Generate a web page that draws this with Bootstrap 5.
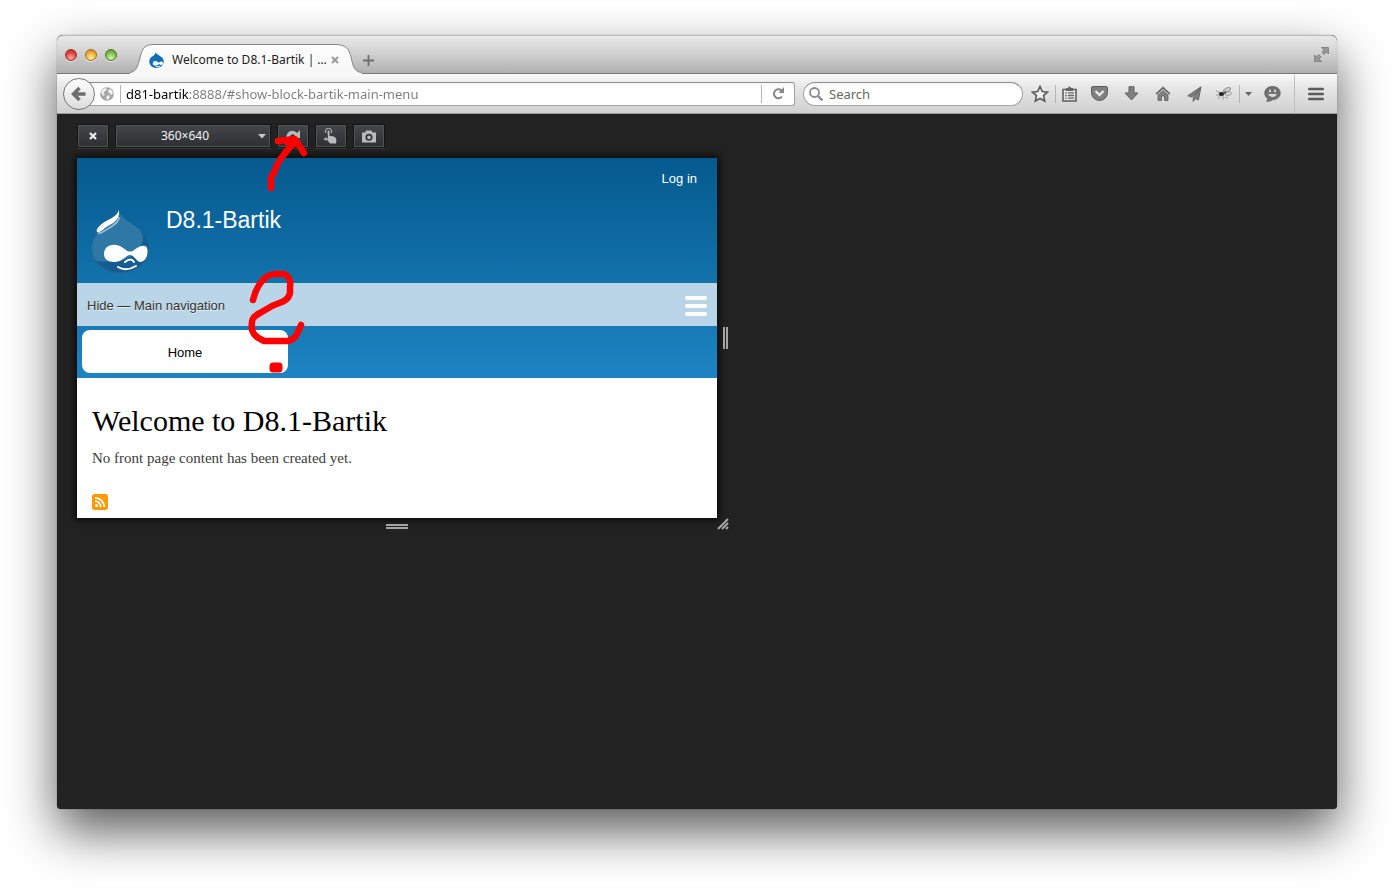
<!DOCTYPE html>
<html lang="en">
<head>
<meta charset="utf-8">
<meta name="viewport" content="width=device-width, initial-scale=1">
<title>Welcome to D8.1-Bartik | D8.1-Bartik</title>
<link href="https://cdn.jsdelivr.net/npm/bootstrap@5.3.0/dist/css/bootstrap.min.css" rel="stylesheet">
<style>
  body { background: #fff; font-family: "Noto Sans", "Open Sans", sans-serif; font-size: 12px; line-height: 16px; }
  button, .plain-btn { border: 0; background: none; padding: 0; }
  svg { display: block; flex: none; }
  .desktop { padding: 35px 57px 79px; min-height: 100vh; }
  .browser { background: #222; border-radius: 6px 6px 4px 4px; box-shadow: 0 22px 50px rgba(0,0,0,.65), 0 0 1px rgba(0,0,0,.7); }

  /* window chrome */
  .titlebar { height: 39px; padding: 0 8px; background: linear-gradient(#e9e9e9, #d2d2d2 45%, #b0b0b0); border-bottom: 1px solid #777; border-top: 1px solid #bdbdbd; border-radius: 6px 6px 0 0; }
  .light { width: 12px; height: 12px; border-radius: 50%; box-shadow: 0 1px 0 rgba(255,255,255,.6); }
  .light-close { background: radial-gradient(circle at 50% 80%, #ffb0a8, #e8433f 55%, #a52c2a); border: 1px solid #983330; }
  .light-min { background: radial-gradient(circle at 50% 80%, #ffeb9c, #f3b23c 55%, #b37818); border: 1px solid #a2701f; }
  .light-zoom { background: radial-gradient(circle at 50% 80%, #d8f5a5, #7fc050 55%, #4c852c); border: 1px solid #4b7c31; }
  .tab-item { width: 232px; height: 29px; margin-left: 13px; }
  .tab-shape { position: absolute; left: 0; top: 0; }
  .tab-face { position: relative; padding: 3px 23px 0 19px; }
  .tab-face span { color: #1c1c1c; }
  .new-tab { width: 12px; height: 29px; padding-top: 4px; }

  .toolbar-row { height: 40px; background: linear-gradient(#fafafa, #e6e6e6 35%, #d0d0d0); border-bottom: 1px solid #9a9a9a; padding-left: 6px; }
  .back-btn { position: relative; width: 32px; height: 32px; border: 1px solid #777; border-radius: 50%; background: linear-gradient(#fefefe, #dcdcdc); }
  .field-box { height: 24px; border: 1px solid #a3a3a3; border-top-color: #8b8b8b; background: linear-gradient(#f7f7f7, #fff 30%); }
  .url-box { margin-left: -8px; padding-left: 13px; border-radius: 0 3px 3px 0; border-left: 0; }
  .url-rule { margin: 0 5px 0 6px; }
  .search-box { width: 220px; margin-left: 8px; border-radius: 12px; padding: 0 8px 0 5px; }
  .search-box input { margin-left: 6px; }
  .field-box input { border: 0; outline: 0; padding: 0; background: none; height: 20px; min-width: 0; font-size: 13px; }
  .search-box input::placeholder { color: #666; opacity: 1; }
  .field-box input.url-input { font-size: 13px; color: #777; background: linear-gradient(90deg, #000 64px, #7b7b7b 64px); -webkit-background-clip: text; background-clip: text; -webkit-text-fill-color: transparent; }
  .rule-v { width: 1px; height: 18px; background: #b5b5b5; }
  .tools { margin-left: 2px; }
  .tools button, .reload-btn { display: flex; justify-content: center; align-items: center; height: 24px; }
  .w-sm-cell { width: 30px; } .w-list { width: 27px; } .w-md-cell { width: 32px; } .w-caret { width: 16px; }
  .menu-cell { width: 42px; }
  .menu-rule { width: 1px; height: 38px; background: #bdbdbd; margin-left: 6px; }

  /* responsive design view */
  .stage { position: relative; padding: 10px 20px 0; min-height: 695px; }
  .rdm-bar { gap: 6px; margin-bottom: 10px; }
  .rdm-btn, .rdm-size { height: 24px; border: 1px solid #141414; background: linear-gradient(#44474a, #2d2f31); box-shadow: inset 0 0 0 1px #505456, 0 1px 0 #3a3a3a; color: #f0f4f8; border-radius: 0; }
  .rdm-btn { width: 32px; display: flex; align-items: center; justify-content: center; }
  .rdm-size { width: 156px; font-size: 12px; padding: 0 16px 0 0; appearance: none; text-align-last: center; }
  .size-wrap { position: relative; }
  .size-caret { position: absolute; right: 5px; top: 10px; pointer-events: none; }
  .device-grid { display: grid; grid-template-columns: minmax(0, 640px) 17px; grid-template-rows: auto 16px; }
  .device { min-height: 360px; background: #fff; box-shadow: 0 0 7px 2px rgba(0,0,0,.75); }
  .grip-v { width: 5px; height: 22px; border: solid #a5a5a5; border-width: 0 2px; }
  .grip-h { width: 22px; height: 5px; border: solid #a5a5a5; border-width: 2px 0; }

  /* the site */
  .site-text { font-family: "Liberation Sans", Arial, sans-serif; }
  .site-head { background: linear-gradient(#055a8e, #1d84c3); }
  .site-head a { text-decoration: none; }
  .login-row { padding: 12px 20px 0; height: 47px; font-size: 13px; line-height: 18px; }
  .brand-row { height: 78px; padding: 0 15px; gap: 16px; }
  .brand-logo { margin-top: 4px; }
  .brand-name { font-size: 23px; line-height: 30px; }
  .nav-toggle { height: 43px; padding: 2px 10px 0; background: #b9d5e7; color: #333; font-size: 13px; text-shadow: 0 1px #eee; }
  .burger { display: grid; gap: 4px; }
  .burger i { width: 22px; height: 4px; border-radius: 2px; background: #fff; }
  .home-row { padding: 4px 5px 5px; }
  .home-link { width: 206px; height: 43px; border-radius: 8px; font-size: 13px; line-height: 46px; }
  .site-main { padding: 24px 15px 8px; font-family: "Liberation Serif", Georgia, serif; color: #3b3b3b; }
  .site-main h1 { font-size: 30px; line-height: 38px; margin-bottom: 8px; color: #000; font-weight: 400; }
  .site-main p { font-size: 15px; line-height: 20px; margin-bottom: 26px; }
  .feed-link { display: block; width: 16px; }
  .scribble { position: absolute; left: 180px; top: 10px; pointer-events: none; }
</style>
</head>
<body>
<div class="desktop d-flex flex-column">
 <div class="browser flex-grow-1 d-flex flex-column">
  <header class="titlebar d-flex">
    <div class="d-flex align-items-center gap-2" aria-hidden="true">
      <span class="light light-close"></span><span class="light light-min"></span><span class="light light-zoom"></span>
    </div>
    <div class="tab-item position-relative mt-auto">
      <svg class="tab-shape" width="232" height="30" viewBox="0 0 232 30">
        <defs><linearGradient id="tabFill" x1="0" y1="0" x2="0" y2="1"><stop offset="0" stop-color="#fdfdfd"/><stop offset="1" stop-color="#f7f7f7"/></linearGradient></defs>
        <path d="M0 28.500C6 28 8 22 10 14C12 5 14 .5 24 .5H205C216 .5 219 5 221 13C223 22 224 28 232 28.500V30H0Z" fill="url(#tabFill)"/>
        <path d="M0 28.500C6 28 8 22 10 14C12 5 14 .5 24 .5H205C216 .5 219 5 221 13C223 22 224 28 232 28.500" fill="none" stroke="#888"/>
      </svg>
      <div class="tab-face d-flex align-items-center h-100">
        <svg width="15" height="16" viewBox="0 0 58 64"><path d="M26 0c2 7 7 10 14 14c10 6 18 13 18 25a29 25 0 0 1-58 0C0 26 8 19 16 14c6-4 9-7 10-14Z" fill="#0b6db3"/><path d="M22 8c-1 6-12 9-17 15c3-8 11-11 17-15Z" fill="#fff"/><path d="M14 46c0-12 14-13 24-3c8-7 16-7 17 2c0 8-8 10-16 3c-10 10-25 8-25-2Z" fill="#fff"/><path d="M26 57q9 6 18-1" stroke="#fff" stroke-width="4" fill="none"/></svg>
        <span class="ms-2 text-nowrap">Welcome to D8.1-Bartik | …</span>
        <button class="ms-auto" type="button" aria-label="Close tab"><svg width="8" height="8" viewBox="0 0 8 8"><path d="M1 1l6 6M7 1L1 7" stroke="#999" stroke-width="2"/></svg></button>
      </div>
    </div>
    <button class="new-tab mt-auto d-flex align-items-center justify-content-center" type="button" aria-label="New tab"><svg width="11" height="11" viewBox="0 0 11 11"><path d="M5.500 0v11M0 5.500h11" stroke="#6d6d6d" stroke-width="1.800"/></svg></button>
    <button class="ms-auto" type="button" aria-label="Full screen"><svg width="15" height="15" viewBox="0 0 14 14" fill="#999" stroke="#6f6f6f" stroke-width=".7"><path d="M7 .5h6.500v6l-2-2-2 2.500-2-2 2-2.500z"/><path d="M7 13.500H.5v-6l2 2 2-2.500 2 2-2 2.500z"/></svg></button>
  </header>

  <nav class="toolbar-row d-flex align-items-center" aria-label="Browser toolbar">
    <button class="back-btn d-flex align-items-center justify-content-center z-1" type="button" aria-label="Back"><svg width="16" height="16" viewBox="0 0 16 16"><path d="M8.500 2L2.500 8l6 6M3 8h11.500" fill="none" stroke="#6e6e6e" stroke-width="3.500"/></svg></button>
    <div class="field-box url-box flex-grow-1 d-flex align-items-center">
      <svg width="14" height="14" viewBox="0 0 14 14"><circle cx="7" cy="7" r="6.800" fill="#a5a5a5"/><path d="M1 5Q2 2 5.500 1L7 2.500 5 4 3.500 6 5 8 3 9 2 7ZM9 2L11.500 3 13 6.500 11 8 9.500 6 8 5ZM7 9L9 8 10 10 8 13 6 11Z" fill="#f2f2f2"/></svg>
      <span class="rule-v url-rule"></span>
      <input class="url-input flex-grow-1" type="text" aria-label="Address" value="d81-bartik:8888/#show-block-bartik-main-menu">
      <span class="rule-v"></span>
      <button class="reload-btn w-md-cell" type="button" aria-label="Reload"><svg width="13" height="13" viewBox="0 0 13 13"><path d="M10 9.500A4.500 4.500 0 1 1 9.500 3.500" fill="none" stroke="#858585" stroke-width="2"/><path d="M12 0v6H6.500z" fill="#858585"/></svg></button>
    </div>
    <div class="field-box search-box d-flex align-items-center">
      <svg width="14" height="14" viewBox="0 0 14 14" fill="none" stroke="#8b8b8b"><circle cx="5.500" cy="5.500" r="4.500" stroke-width="1.800"/><path d="M9 9l4.500 4.500" stroke-width="2.400"/></svg>
      <input class="flex-grow-1" type="search" placeholder="Search" aria-label="Search">
    </div>
    <div class="tools d-flex align-items-center">
      <button class="w-sm-cell" type="button" aria-label="Bookmark"><svg width="18" height="18" viewBox="0 0 18 18"><path d="M9 1.500l2.300 5 5.200.6-3.900 3.500 1.100 5.400L9 13.400 4.300 16l1.100-5.400L1.500 7.100l5.200-.6z" fill="#eee" stroke="#5e5e5e" stroke-width="1.700"/></svg></button>
      <span class="rule-v"></span>
      <button class="w-list" type="button" aria-label="Bookmarks list"><svg width="15" height="16" viewBox="0 0 15 16"><path d="M1 3.500h13V15H1z" fill="#e6e6e6" stroke="#5e5e5e" stroke-width="1.600"/><path d="M4 2h2a1.500 1.500 0 0 1 3 0h2v3H4z" fill="#666"/><path d="M3.200 6.800h1.600m1.200 0h6M3.200 9.500h1.600m1.200 0h6M3.200 12.200h1.600m1.200 0h6" stroke="#666" stroke-width="1.300"/></svg></button>
      <button class="w-md-cell" type="button" aria-label="Pocket"><svg width="17" height="15" viewBox="0 0 17 15"><path d="M2 .5h13q1.500 0 1.500 1.500v4.500a8 8 0 0 1-16 0V2Q.5.500 2 .5z" fill="#808080" stroke="#5e5e5e"/><path d="M4.500 5l4 4 4-4" fill="none" stroke="#eee" stroke-width="2.200"/></svg></button>
      <button class="w-md-cell" type="button" aria-label="Downloads"><svg width="15" height="15" viewBox="0 0 15 15"><path d="M5 .7h5V7h4L7.500 14 1 7h4z" fill="#808080" stroke="#606060"/></svg></button>
      <button class="w-md-cell" type="button" aria-label="Home page"><svg width="16" height="15" viewBox="0 0 16 15"><path d="M8 .5l7.500 7-1.200 1.200L8 3 1.700 8.700.5 7.500z" fill="#666"/><path d="M3 9l5-4.500L13 9v5.500H9.500V10h-3v4.500H3z" fill="#808080" stroke="#606060" stroke-width=".8"/></svg></button>
      <button class="w-sm-cell" type="button" aria-label="Share"><svg width="15" height="16" viewBox="0 0 15 16"><path d="M14 .8L.8 9.800l4 1.200L13 3 6.200 11.500v4l2.200-3 3 1.500z" fill="#808080" stroke="#5e5e5e" stroke-width=".9"/></svg></button>
      <button class="w-sm-cell" type="button" aria-label="Debugger"><svg width="16" height="14" viewBox="0 0 16 14"><g fill="none" stroke="#888" stroke-width=".8"><path d="M0 4l5 2M2 12l3-4M7 13V8M0 8h5M9 10l3 1"/><ellipse cx="11" cy="3" rx="4" ry="2" fill="#ccc" transform="rotate(-28 11 3)"/><ellipse cx="12" cy="6.500" rx="3.500" ry="1.800" fill="#ddd"/></g><ellipse cx="5.500" cy="7" rx="2.600" ry="2" fill="#222"/><circle cx="9" cy="5.500" r="1.500" fill="#666"/></svg></button>
      <span class="rule-v"></span>
      <button class="w-caret" type="button" aria-label="Debugger options"><svg width="7" height="4" viewBox="0 0 7 4"><path d="M0 0h7L3.500 4z" fill="#666"/></svg></button>
      <button class="w-md-cell" type="button" aria-label="Chat"><svg width="17" height="16" viewBox="0 0 17 16"><path d="M8.500.5c4.500 0 7.700 2.700 7.700 6.500s-3.200 6.700-7.700 6.700c-1 1-3 1.800-6 1.500 1-.8 1.300-1.800 1-3C1.500 11 .8 9 .8 7 .8 3.200 4 .5 8.500.5z" fill="#717171" stroke="#5e5e5e" stroke-width=".8"/><ellipse cx="6" cy="5" rx="1" ry="1.400" fill="#ddd"/><ellipse cx="11" cy="5" rx="1" ry="1.400" fill="#ddd"/><path d="M4 8h9q-1.500 3-4.500 3T4 8z" fill="#ddd"/></svg></button>
      <span class="menu-rule"></span>
      <button class="menu-cell" type="button" aria-label="Open menu"><svg width="16" height="14" viewBox="0 0 16 14"><path d="M1.200 2h13.600M1.200 7h13.600M1.200 12h13.600" stroke="#5b5b5b" stroke-width="2.600" stroke-linecap="round"/></svg></button>
    </div>
  </nav>

  <main class="stage flex-grow-1">
    <div class="rdm-bar d-flex">
      <button class="rdm-btn" type="button" aria-label="Leave responsive view"><svg width="8" height="8" viewBox="0 0 8 8"><path d="M1 1l6 6M7 1L1 7" stroke="#eee" stroke-width="2.200"/></svg></button>
      <div class="size-wrap">
        <select class="rdm-size d-block" aria-label="Screen size"><option>360×640</option></select>
        <svg class="size-caret" width="8" height="5" viewBox="0 0 8 5"><path d="M0 0h8L4 4.500z" fill="#c5c8ca"/></svg>
      </div>
      <button class="rdm-btn" type="button" aria-label="Rotate"><svg width="16" height="12" viewBox="0 0 16 12"><path d="M1 10C1 0 8 -1 12 3L15 0v8H7l3-3C7 3 4 5 4 10z" fill="#b8babd"/></svg></button>
      <button class="rdm-btn" type="button" aria-label="Simulate touch"><svg width="16" height="16" viewBox="0 0 16 16"><path d="M3 5a3 3 0 1 1 5 0" fill="none" stroke="#a8aaad" stroke-width="1.200"/><path d="M4.500 3q1-1.200 2 0v5q4-.5 6 1.500 1.500 2 .5 6H7L3.500 11q0-1 1.500-.5z" fill="#b8babd"/><path d="M3.500 9v4L.5 11z" fill="#b8babd"/></svg></button>
      <button class="rdm-btn" type="button" aria-label="Screenshot"><svg width="16" height="13" viewBox="0 0 16 13"><path d="M1 2.500h3L5 .5h5.500l1 2H15v10H1z" fill="#b8babd"/><circle cx="8" cy="7.300" r="2.700" fill="#b8babd" stroke="#333" stroke-width="1.700"/></svg></button>
    </div>

    <div class="device-grid">
      <div class="device">
        <header class="site-head site-text">
          <div class="login-row text-end"><a class="text-white" href="#">Log in</a></div>
          <div class="brand-row d-flex align-items-start">
            <svg class="brand-logo" width="58" height="65" viewBox="0 0 58 65">
              <path d="M27 1c1 6 7 10 13 14c10 6 17 15 17 25a28.500 24 0 0 1-57 0C0 29 7 21 15 17C21 13 26 9 27 1Z" fill="#155d90"/>
              <path d="M27 1c1 6 7 10 13 14c7 4 11 9 11 14c0 10-11 22-27 23c-10 1-19 1-23-2C-3 34 4 22 15 17C21 13 26 9 27 1Z" fill="#2f78a6"/>
              <path d="M57 40a28.500 24 0 0 1-57 0" fill="none" stroke="#2b6793"/>
              <path d="M27 1C28 10 22 14 16 17C11 20 7 25 5 23C3 20 10 14 16 11C22 8 25 6 27 1Z" fill="#fff"/><path d="M27 8c0 6-8 10-13 13c-3 2-5 4-8 3" fill="none" stroke="#a3c1d5" stroke-width="1.500"/>
              <path d="M12 45C12 35 24 32 34 41C36 43 40 43 42 41C49 36 55 35 55.500 41C56 49 52 53 48 53C44 52 42 46 38 46C34 46 31 53 22 53C16 53 12 50 12 45Z" fill="#fff"/>
              <path d="M33 53q6-5 9 0M26 58q8 5 18-1" fill="none" stroke="#fff" stroke-width="2" stroke-linecap="round"/>
            </svg>
            <a class="brand-name text-white" href="#">D8.1-Bartik</a>
          </div>
          <button class="nav-toggle w-100 d-flex align-items-center justify-content-between" type="button" aria-expanded="true"><span>Hide — Main navigation</span><span class="burger"><i></i><i></i><i></i></span></button>
          <div class="home-row"><a class="home-link d-block bg-white text-black text-center" href="#">Home</a></div>
        </header>
        <article class="site-main">
          <h1>Welcome to D8.1-Bartik</h1>
          <p>No front page content has been created yet.</p>
          <a class="feed-link" href="#" aria-label="Subscribe"><svg width="16" height="16" viewBox="0 0 16 16"><rect width="16" height="16" rx="2.500" fill="#ff9a05"/><circle cx="4.500" cy="11.500" r="1.500" fill="#fff"/><path d="M3 7.200A5.800 5.800 0 0 1 8.800 13M3 3.800A9.200 9.200 0 0 1 12.200 13" fill="none" stroke="#fff" stroke-width="1.800"/></svg></a>
        </article>
      </div>
      <div class="d-flex align-items-center justify-content-center"><span class="grip-v"></span></div>
      <div class="d-flex align-items-center justify-content-center"><span class="grip-h"></span></div>
      <div><svg width="12" height="12" viewBox="0 0 12 12"><path d="M1 11L11 1M5 11l6-6M9 11l2-2" stroke="#aaa" stroke-width="1.900"/></svg></div>
    </div>

    <svg class="scribble" width="80" height="260" viewBox="237 124 80 260" fill="none" stroke="red" stroke-width="6.500" stroke-linecap="round" stroke-linejoin="round" aria-hidden="true">
      <path d="M271 188V177L274 173C276 166 278 162 282 157L294 142"/><path d="M278 141L295 139L304 153M287 142L295 144"/>
      <path d="M253 300C255 292 258 285 263 280C268 275 271 274 276 274H284C289 276 291 281 290 287V293C288 302 280 302 272 306L260 313C252 317 251 320 252 330C254 336 258 338 264 341H288C296 339 297 334 301 325"/>
      <path d="M273 366h6v3h-6z" stroke-width="7"/>
    </svg>
  </main>
 </div>
</div>
<script src="https://cdn.jsdelivr.net/npm/bootstrap@5.3.0/dist/js/bootstrap.bundle.min.js"></script>
</body>
</html>
